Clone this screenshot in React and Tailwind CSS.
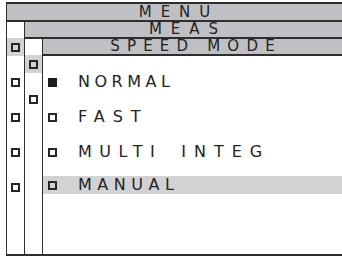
import React from 'react';

const font = { fontFamily: '"DejaVu Sans", Verdana, sans-serif' };

function Box({ filled = false }) {
  return filled
    ? <div className="w-[9px] h-[9px] bg-[#1c1c1c]" />
    : <div className="w-[9px] h-[9px] border-2 border-[#262626]" />;
}

const LINE = 'border-[#2e2e2e]';
const HEAD = `shrink-0 bg-[#bfc0c4] border-b-2 ${LINE} flex items-center justify-center text-[15px] leading-[15px]`;

export default function App() {
  return (
    <div className="w-[342px] h-[256px] bg-white pt-[2px] pl-[6px] text-[#232323] text-[16px] leading-none" style={font}>
      <div className={`h-[254px] flex flex-col border-t-2 border-b-2 border-l-[1.5px] ${LINE}`}>
        {/* MENU */}
        <div className={`h-[18px] ${HEAD} tracking-[9px] pl-[9px]`}>
          MENU
        </div>

        <div className="flex-1 flex">
          {/* level 1 column */}
          <div className="w-[17px] shrink-0 flex flex-col items-center">
            <div className="h-[16px]" />
            <div className="w-full h-[18px] bg-[#d2d2d4] flex items-center justify-center">
              <Box />
            </div>
            <div className="mt-[22px]"><Box /></div>
            <div className="mt-[26px]"><Box /></div>
            <div className="mt-[26px]"><Box /></div>
            <div className="mt-[26px]"><Box /></div>
          </div>

          <div className={`flex-1 flex flex-col border-l-[1.5px] ${LINE}`}>
            {/* MEAS */}
            <div className={`h-[17px] ${HEAD} tracking-[9px] pl-[9px]`}>
              MEAS
            </div>

            <div className="flex-1 flex">
              {/* level 2 column */}
              <div className="w-[17px] shrink-0 flex flex-col items-center">
                <div className="h-[16px]" />
                <div className="w-full h-[18px] bg-[#d2d2d4] flex items-center justify-center">
                  <Box />
                </div>
                <div className="mt-[22px]"><Box /></div>
              </div>

              <div className={`flex-1 flex flex-col border-l-[1.5px] ${LINE}`}>
                {/* SPEED MODE */}
                <div className={`h-[17px] ${HEAD} tracking-[7.2px] pl-[7px]`}>
                  SPEED MODE
                </div>

                <div className="flex flex-col">
                  <div className="mt-[17px] h-[18px] flex items-center pl-[5px]">
                    <Box filled />
                    <span className="ml-[21px] tracking-[4.5px]">NORMAL</span>
                  </div>
                  <div className="mt-[17px] h-[18px] flex items-center pl-[5px]">
                    <Box />
                    <span className="ml-[21px] tracking-[8px]">FAST</span>
                  </div>
                  <div className="mt-[17px] h-[18px] flex items-center pl-[5px]">
                    <Box />
                    <span className="ml-[21px] tracking-[7.5px]">MULTI</span>
                    <span className="ml-[19px] tracking-[8px]">INTEG</span>
                  </div>
                  <div className="mt-[15px] h-[18px] flex items-center pl-[5px] bg-[#d2d2d4]">
                    <Box />
                    <span className="ml-[21px] tracking-[5.5px]">MANUAL</span>
                  </div>
                </div>
              </div>
            </div>
          </div>
        </div>
      </div>
    </div>
  );
}
